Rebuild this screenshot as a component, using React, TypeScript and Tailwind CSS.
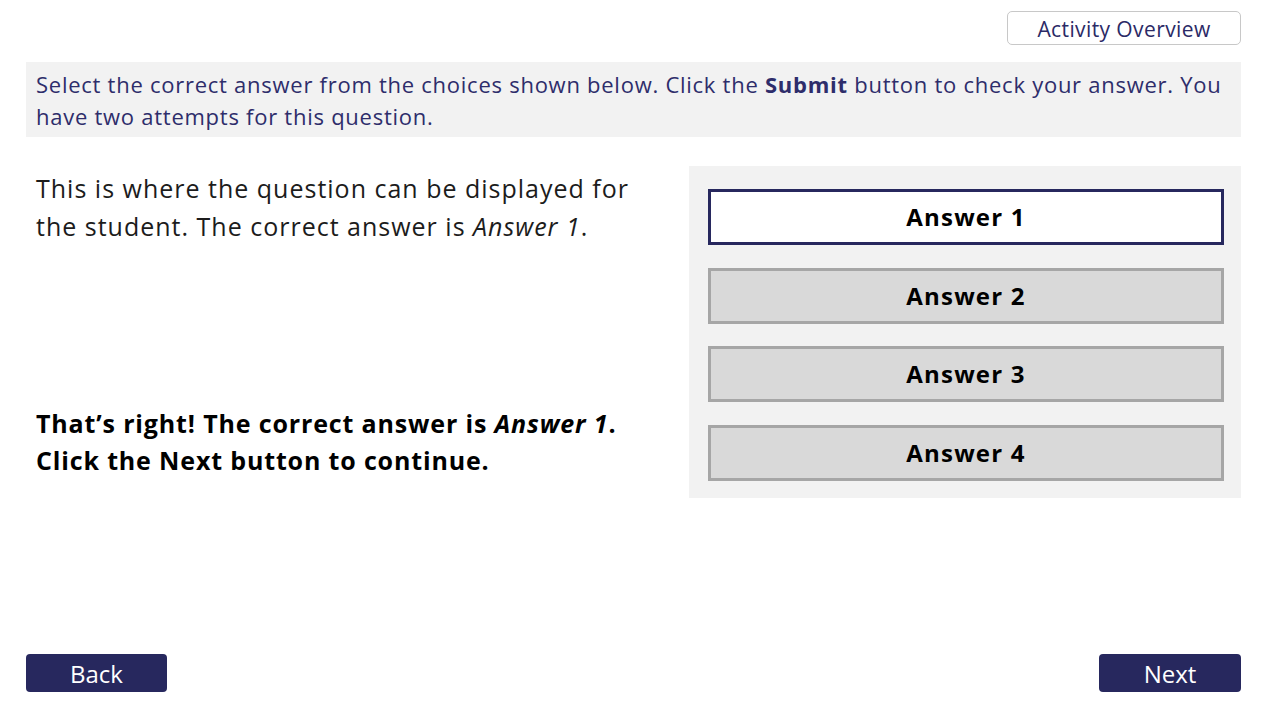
const answers = ['Answer 1', 'Answer 2', 'Answer 3', 'Answer 4'];

export default function App() {
  const selected = 0;
  return (
    <div className="flex h-[712px] w-full flex-col bg-white px-[26px] font-['Open_Sans',sans-serif]">
      <div className="flex justify-end pt-[11px]">
        <button className="flex h-[34px] w-[234px] items-center justify-center rounded-[5px] border border-[#c8c8c8] bg-white pt-[3px] text-[21px] tracking-[0.4px] text-[#2b2a66]">
          Activity Overview
        </button>
      </div>

      <div className="mt-[17px] h-[75px] bg-[#f2f2f2] pl-[10px] pr-[4px] pt-[6px] text-[22px] leading-[32px] tracking-[0.74px] text-[#2e2d6b]">
        Select the correct answer from the choices shown below. Click the <b>Submit</b> button to check your answer. You
        have two attempts for this question.
      </div>

      <div className="mt-[29px] flex">
        <div className="w-[663px] pl-[10px] pt-[3px] pr-[20px] text-[25px] text-[#1c1c1c]">
          <p className="leading-[38px] tracking-[1px]">
            This is where the question can be displayed for the student. The correct answer is <i>Answer 1</i>.
          </p>
          <p className="mt-[160px] font-bold leading-[37px] tracking-[0.85px] text-black">
            That’s right! The correct answer is <i>Answer 1</i>.
            <br />
            Click the Next button to continue.
          </p>
        </div>

        <div className="flex h-[332px] w-[552px] flex-col gap-[22.5px] bg-[#f2f2f2] pl-[19px] pt-[23px]">
          {answers.map((a, i) => (
            <button
              key={a}
              className={
                i === selected
                  ? 'flex h-[56px] w-[516px] items-center justify-center border-[3px] border-[#27285e] bg-white text-[24px] font-bold tracking-[1.2px] text-black'
                  : 'flex h-[56px] w-[516px] items-center justify-center border-[3px] border-[#a6a6a6] bg-[#d9d9d9] text-[24px] font-bold tracking-[1.2px] text-black'
              }
            >
              {a}
            </button>
          ))}
        </div>
      </div>

      <div className="mt-auto flex justify-between pb-[20px]">
        <button className="flex h-[38px] w-[141px] items-center justify-center rounded-[4px] bg-[#27285e] pt-[2px] text-[24px] text-white">
          Back
        </button>
        <button className="flex h-[38px] w-[142px] items-center justify-center rounded-[4px] bg-[#27285e] pt-[2px] text-[24px] text-white">
          Next
        </button>
      </div>
    </div>
  );
}
